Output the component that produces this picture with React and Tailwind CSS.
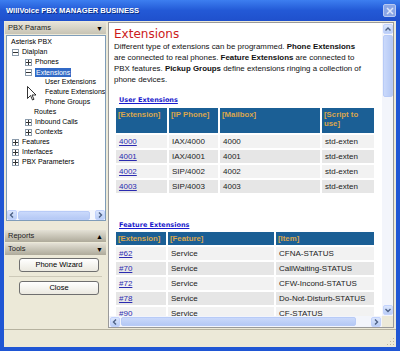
import React from 'react';

const treeRows = [
  { label: 'Asterisk PBX', pad: 'pl-[4px]', box: null },
  { label: 'Dialplan', pad: 'pl-[5px]', box: '-' },
  { label: 'Phones', pad: 'pl-[18px]', box: '+' },
  { label: 'Extensions', pad: 'pl-[18px]', box: '-', selected: true },
  { label: 'User Extensions', pad: 'pl-[38px]', box: null },
  { label: 'Feature Extensions', pad: 'pl-[38px]', box: null },
  { label: 'Phone Groups', pad: 'pl-[38px]', box: null },
  { label: 'Routes', pad: 'pl-[27px]', box: null },
  { label: 'Inbound Calls', pad: 'pl-[18px]', box: '+' },
  { label: 'Contexts', pad: 'pl-[18px]', box: '+' },
  { label: 'Features', pad: 'pl-[5px]', box: '+' },
  { label: 'Interfaces', pad: 'pl-[5px]', box: '+' },
  { label: 'PBX Parameters', pad: 'pl-[5px]', box: '+' },
];

const userExt = [
  ['4000', 'IAX/4000', '4000', 'std-exten'],
  ['4001', 'IAX/4001', '4001', 'std-exten'],
  ['4002', 'SIP/4002', '4002', 'std-exten'],
  ['4003', 'SIP/4003', '4003', 'std-exten'],
];

const featureExt = [
  ['#62', 'Service', 'CFNA-STATUS'],
  ['#70', 'Service', 'CallWaiting-STATUS'],
  ['#72', 'Service', 'CFW-Incond-STATUS'],
  ['#78', 'Service', 'Do-Not-Disturb-STATUS'],
  ['#90', 'Service', 'CF-STATUS'],
];

function ExpandBox({ sign }) {
  return (
    <span className="w-[7px] h-[7px] border border-[#8c9cac] bg-white flex items-center justify-center mr-[3px] shrink-0">
      <svg width="5" height="5" viewBox="0 0 5 5">
        <path d="M0 2.5h5" stroke="#333" strokeWidth="1" />
        {sign === '+' && <path d="M2.5 0v5" stroke="#333" strokeWidth="1" />}
      </svg>
    </span>
  );
}

function Arrow({ dir }) {
  const d = {
    up: 'M1.5 5.5L4 3l2.5 2.5',
    down: 'M1.5 3L4 5.5 6.5 3',
    left: 'M5 1.5L2.5 4 5 6.5',
    right: 'M3 1.5L5.5 4 3 6.5',
  }[dir];
  return (
    <svg width="8" height="8" viewBox="0 0 8 8">
      <path d={d} fill="none" stroke="#4d6185" strokeWidth="1.4" />
    </svg>
  );
}

function ScrollBtn({ dir }) {
  return (
    <div className="w-[10px] h-[10px] shrink-0 rounded-[2px] bg-gradient-to-b from-[#dbe6fd] to-[#b9cdf6] border border-[#c3d3fd] flex items-center justify-center">
      <Arrow dir={dir} />
    </div>
  );
}

function PanelHeader({ title, arrow, dark }) {
  return (
    <div
      className={`h-[12px] flex items-center justify-between px-[3px] text-[7.5px] text-[#222] ${
        dark
          ? 'bg-gradient-to-b from-[#e4e1d6] to-[#aeaa9a]'
          : 'bg-gradient-to-b from-[#e6e3d8] to-[#c8c4b4]'
      }`}
    >
      <span>{title}</span>
      <span className="text-[7px] leading-none text-black">{arrow}</span>
    </div>
  );
}

function XpButton({ children }) {
  return (
    <div className="ml-[14px] w-[80px] h-[14px] rounded-[3px] border border-[#6f6f6f] bg-gradient-to-b from-white to-[#ebe9e0] flex items-center justify-center text-[7.5px] text-black">
      {children}
    </div>
  );
}

function Th({ children, w }) {
  return (
    <th className={`${w} bg-[#1b5f95] text-[#d9a64e] font-bold text-left align-top px-[2px] pt-[2px] text-[7.8px] leading-[9px]`}>
      {children}
    </th>
  );
}

const linkFont = { fontFamily: '"DejaVu Sans", Verdana, sans-serif' };

export default function App() {
  return (
    <div
      className="w-[400px] h-[351px] bg-[#1f56d4] flex flex-col overflow-hidden"
      style={{ fontFamily: '"Liberation Sans", Arial, sans-serif' }}
    >
      {/* Title bar */}
      <div className="h-[21px] shrink-0 bg-gradient-to-b from-[#3d7ef0] via-[#2359d6] to-[#1f50cc] flex items-center justify-between pl-[6px] pr-[4px]">
        <span className="text-white font-bold text-[7.6px] [text-shadow:1px_1px_0_#0b2f86]">
          WillVoice PBX MANAGER BUSINESS
        </span>
        <div className="w-[13px] h-[13px] rounded-[2px] bg-[#8aa6e6] border border-[#b7c9f2] flex items-center justify-center">
          <svg width="8" height="8" viewBox="0 0 8 8">
            <path d="M1 1l6 6M7 1L1 7" stroke="#dfe7fa" strokeWidth="1.5" />
          </svg>
        </div>
      </div>

      {/* Body */}
      <div className="flex-1 mx-[4px] bg-[#ece9d8] flex flex-col">
        <div className="h-[307px] flex pt-[1px] gap-[2px]">
          {/* Left panel */}
          <div className="w-[102px] pl-[1px] flex flex-col">
            <PanelHeader title="PBX Params" arrow="▼" />
            <div className="relative mt-[1px] ml-[1px] h-[186px] border border-[#7f9db9] bg-white flex flex-col">
              <div className="flex-1 pt-[1px] overflow-hidden">
                {treeRows.map((r) => (
                  <div key={r.label} className={`h-[10px] flex items-center ${r.pad} text-[7px] text-black whitespace-nowrap`}>
                    {r.box && <ExpandBox sign={r.box} />}
                    <span className={r.selected ? 'bg-[#3169c6] text-white px-[1px] leading-[9px]' : ''}>{r.label}</span>
                  </div>
                ))}
              </div>
              {/* tree horizontal scrollbar */}
              <div className="h-[10px] flex items-center bg-[#f5f7fd] gap-[1px]">
                <ScrollBtn dir="left" />
                <div className="w-[72px] h-[9px] rounded-[2px] bg-gradient-to-b from-[#cad9fb] to-[#b5c9f5] border border-[#b8cbf7]" />
                <div className="flex-1" />
                <ScrollBtn dir="right" />
              </div>
              {/* mouse cursor */}
              <svg className="absolute left-[20px] top-[50px]" width="9" height="15" viewBox="0 0 9 15">
                <path d="M0.5 0.5v12l3-3 2 4.5 1.5-0.7-2-4.3h4z" fill="white" stroke="black" strokeWidth="0.8" />
              </svg>
            </div>
            <div className="h-[9px]" />
            <PanelHeader title="Reports" arrow="▲" dark />
            <div className="h-[1px]" />
            <PanelHeader title="Tools" arrow="▼" dark />
            <div className="pt-[3px] flex flex-col">
              <XpButton>Phone Wizard</XpButton>
              <div className="mx-[4px] my-[4px] h-px bg-[#cdc9b8]" />
              <XpButton>Close</XpButton>
            </div>
          </div>

          {/* Right content panel */}
          <div className="flex-1 mr-[2px] border border-[#9a9a9a] bg-white flex flex-col">
            <div className="flex flex-1 min-h-0">
              <div className="flex-1 overflow-hidden pl-[5px] pt-[4px]">
                <div className="text-[#cc1a1a] text-[12px] leading-[14px]" style={linkFont}>
                  Extensions
                </div>
                <p className="text-[7.9px] leading-[11px] text-[#111] whitespace-nowrap">
                  Different type of extensions can be programmed. <b>Phone Extensions</b>
                  <br />
                  are connected to real phones. <b>Feature Extensions</b> are connected to
                  <br />
                  PBX features. <b>Pickup Groups</b> define extensions ringing a collection of
                  <br />
                  phone devices.
                </p>

                <div className="mt-[10px] pl-[5px] text-[6.5px] leading-[10px] font-bold text-[#1a1acc] underline" style={linkFont}>
                  User Extensions
                </div>
                <table className="mt-[1px] border-separate border-spacing-[2px] text-[8px]">
                  <thead>
                    <tr className="h-[25px]">
                      <Th w="w-[51px]">[Extension]</Th>
                      <Th w="w-[49px]">[IP Phone]</Th>
                      <Th w="w-[100px]">[Mailbox]</Th>
                      <Th w="w-[52px]">[Script to use]</Th>
                    </tr>
                  </thead>
                  <tbody>
                    {userExt.map((r, i) => (
                      <tr key={r[0]} className={`h-[13px] ${i % 2 === 0 ? 'bg-[#f2f2f2]' : 'bg-[#e6e6e6]'}`}>
                        <td className="px-[3px] text-[#2b2bb0] underline">{r[0]}</td>
                        <td className="px-[3px] text-[#222]">{r[1]}</td>
                        <td className="px-[3px] text-[#222]">{r[2]}</td>
                        <td className="px-[3px] text-[#222]">{r[3]}</td>
                      </tr>
                    ))}
                  </tbody>
                </table>

                <div className="mt-[25px] pl-[5px] text-[6.5px] leading-[10px] font-bold text-[#1a1acc] underline" style={linkFont}>
                  Feature Extensions
                </div>
                <table className="border-separate border-spacing-[2px] text-[8px]">
                  <thead>
                    <tr className="h-[13px]">
                      <Th w="w-[50px]">[Extension]</Th>
                      <Th w="w-[106px]">[Feature]</Th>
                      <Th w="w-[98px]">[Item]</Th>
                    </tr>
                  </thead>
                  <tbody>
                    {featureExt.map((r, i) => (
                      <tr key={r[0]} className={`h-[13px] ${i % 2 === 0 ? 'bg-[#f2f2f2]' : 'bg-[#e6e6e6]'}`}>
                        <td className="px-[3px] text-[#2b2bb0] underline">{r[0]}</td>
                        <td className="px-[3px] text-[#222]">{r[1]}</td>
                        <td className="px-[3px] text-[#222]">{r[2]}</td>
                      </tr>
                    ))}
                  </tbody>
                </table>
              </div>
              {/* vertical scrollbar */}
              <div className="w-[11px] bg-[#f3f5fb] flex flex-col items-center pt-[1px] pb-[1px] gap-[1px]">
                <ScrollBtn dir="up" />
                <div className="w-[10px] h-[62px] rounded-[2px] bg-gradient-to-r from-[#cad9fb] to-[#b5c9f5] border border-[#b8cbf7]" />
                <div className="flex-1" />
                <ScrollBtn dir="down" />
              </div>
            </div>
            {/* horizontal scrollbar */}
            <div className="h-[11px] flex items-center bg-[#f3f5fb] gap-[1px] pl-[1px]">
              <ScrollBtn dir="left" />
              <div className="w-[235px] h-[9px] rounded-[2px] bg-gradient-to-b from-[#cad9fb] to-[#b5c9f5] border border-[#b8cbf7]" />
              <div className="flex-1" />
              <ScrollBtn dir="right" />
              <div className="w-[11px] h-[11px] bg-[#ece9d8]" />
            </div>
          </div>
        </div>

        {/* Status bar */}
        <div className="flex-1 mt-[1px] border-t border-[#b6b29f] flex items-end justify-end pr-[1px] pb-[1px]">
          <svg width="9" height="9" viewBox="0 0 9 9">
            <g fill="#b8b49f">
              <rect x="7" y="1" width="1" height="1" />
              <rect x="4" y="4" width="1" height="1" />
              <rect x="7" y="4" width="1" height="1" />
              <rect x="1" y="7" width="1" height="1" />
              <rect x="4" y="7" width="1" height="1" />
              <rect x="7" y="7" width="1" height="1" />
            </g>
          </svg>
        </div>
      </div>
      <div className="h-[4px] shrink-0" />
    </div>
  );
}
